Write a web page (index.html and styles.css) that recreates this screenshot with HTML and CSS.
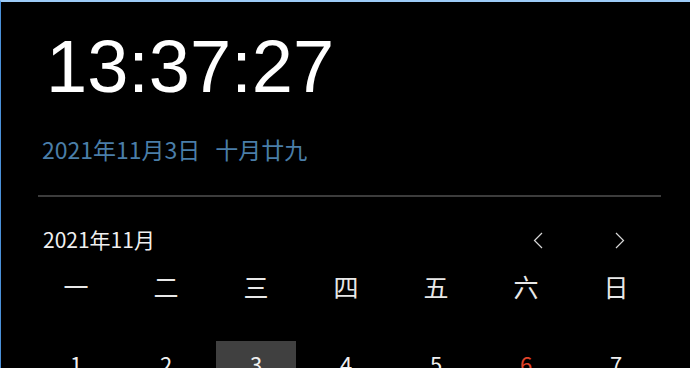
FILE: index.html
```html
<!DOCTYPE html>
<html lang="zh-CN">
<head>
  <meta charset="UTF-8">
  <meta name="viewport" content="width=device-width, initial-scale=1.0">
  <title>时钟</title>
  <link rel="stylesheet" href="styles.css">
</head>
<body>
  <div class="clock">
    <div class="time">13:37:27</div>
    <div class="date">2021年11月3日<span class="lunar">十月廿九</span></div>
  </div>

  <div class="divider"></div>

  <div class="calendar">
    <div class="cal-header">
      <div class="cal-title">2021年11月</div>
      <div class="cal-nav">
        <button class="nav-btn" aria-label="上个月">
          <svg width="10" height="17" viewBox="0 0 10 17"><path d="M9 1 L1.5 8.5 L9 16" fill="none" stroke="#d8d8d8" stroke-width="1.2"/></svg>
        </button>
        <button class="nav-btn" aria-label="下个月">
          <svg width="10" height="17" viewBox="0 0 10 17"><path d="M1 1 L8.5 8.5 L1 16" fill="none" stroke="#d8d8d8" stroke-width="1.2"/></svg>
        </button>
      </div>
    </div>

    <div class="weekdays">
      <div>一</div><div>二</div><div>三</div><div>四</div><div>五</div><div>六</div><div>日</div>
    </div>

    <div class="days">
      <div class="day">1</div><div class="day">2</div><div class="day today">3</div><div class="day">4</div><div class="day">5</div><div class="day sat">6</div><div class="day">7</div>
      <div class="day">8</div><div class="day">9</div><div class="day">10</div><div class="day">11</div><div class="day">12</div><div class="day sat">13</div><div class="day">14</div>
      <div class="day">15</div><div class="day">16</div><div class="day">17</div><div class="day">18</div><div class="day">19</div><div class="day sat">20</div><div class="day">21</div>
      <div class="day">22</div><div class="day">23</div><div class="day">24</div><div class="day">25</div><div class="day">26</div><div class="day sat">27</div><div class="day">28</div>
      <div class="day">29</div><div class="day">30</div>
    </div>
  </div>
</body>
</html>
```

FILE: styles.css
```css
* {
  margin: 0;
  padding: 0;
  box-sizing: border-box;
}

html, body {
  height: 100%;
}

body {
  background: #000;
  color: #e8e8e8;
  border-top: 2px solid #9dcbf7;
  border-left: 1px solid #4a90d9;
  overflow: hidden;
  font-family: "Noto Sans CJK SC", "Noto Sans", sans-serif;
}

.clock {
  padding-left: 41px;
}

.time {
  margin: 28px 0 0 4px;
  font-family: "Liberation Sans", Arial, sans-serif;
  font-size: 74px;
  line-height: 74px;
  color: #fff;
}

.date {
  margin-top: 30px;
  font-size: 23px;
  line-height: 30px;
  color: #4a7ea8;
}

.lunar {
  margin-left: 15px;
}

.divider {
  height: 2px;
  background: #3c3c3c;
  margin: 31px 29px 0 37px;
}

.calendar {
  margin-left: 30px;
  width: 630px;
}

.cal-header {
  display: flex;
  justify-content: space-between;
  align-items: center;
  margin-top: 27px;
  height: 30px;
}

.cal-title {
  padding-left: 12px;
  font-size: 21px;
  color: #f0f0f0;
}

.cal-nav {
  display: flex;
  padding-top: 2px;
}

.nav-btn {
  width: 82px;
  height: 30px;
  background: none;
  border: none;
  display: flex;
  align-items: center;
  justify-content: center;
  cursor: pointer;
}

.weekdays,
.days {
  display: grid;
  grid-template-columns: repeat(7, 90px);
  text-align: center;
}

.weekdays {
  margin-top: 14px;
  font-size: 25px;
  line-height: 36px;
}

.days {
  margin-top: 37px;
  grid-auto-rows: 48px;
  font-size: 22px;
}

.day {
  margin: 0 5px 4px;
  display: flex;
  align-items: center;
  justify-content: center;
  color: #f0f0f0;
}

.today {
  background: #404040;
}

.sat {
  color: #e0442a;
}
```
